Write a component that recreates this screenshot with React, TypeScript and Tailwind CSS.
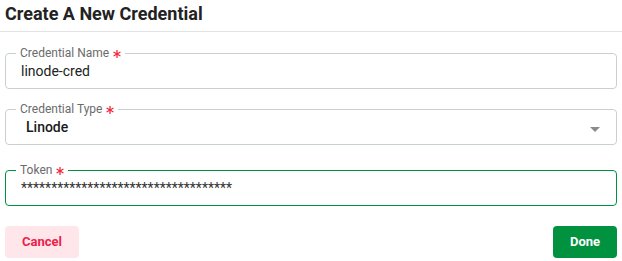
import React from 'react';

const Asterisk = () => (
  <svg width="8" height="8" viewBox="0 0 8 8" className="inline-block ml-[4px] mb-[-1px]">
    <g stroke="#f0283c" strokeWidth="1.3" strokeLinecap="round">
      <path d="M4 0.6v6.8" />
      <path d="M1 2.3l6 3.4" />
      <path d="M1 5.7l6-3.4" />
    </g>
  </svg>
);

const Label = ({ text }: { text: string }) => (
  <legend className="ml-[-5px] px-[4px] text-[12px] leading-[14px] text-[#6b6b6b]">
    {text}
    <Asterisk />
  </legend>
);

export default function App() {
  return (
    <div className="w-[622px] h-[261px] bg-white font-['Roboto',sans-serif] text-[#222]">
      <h1 className="h-[32px] px-[5px] pt-[3px] text-[18px] leading-[22px] font-bold text-[#222] border-b border-[#e3e3e3]">
        Create A New Credential
      </h1>

      <div className="px-[5px] pt-[14px] flex flex-col">
        <fieldset className="h-[43px] rounded-[4px] border border-[#c9d1d0] px-[15px]">
          <Label text="Credential Name" />
          <div className="text-[14px] leading-[20px] pt-[1px]">linode-cred</div>
        </fieldset>

        <fieldset className="mt-[13px] h-[43px] rounded-[4px] border border-[#c9d1d0] pl-[15px] pr-[16px]">
          <Label text="Credential Type" />
          <div className="flex items-center justify-between pt-[1px] pl-[5px]">
            <span className="text-[14px] leading-[20px] font-medium text-[#1a1a1a]">Linode</span>
            <svg width="10" height="5" viewBox="0 0 10 5" className="mt-[4px]">
              <path d="M0 0h10L5 5z" fill="#8a8a8a" />
            </svg>
          </div>
        </fieldset>

        <fieldset className="mt-[18px] h-[43px] rounded-[4px] border border-[#00913f] px-[15px]">
          <Label text="Token" />
          <div className="text-[14px] leading-[20px] pt-[1px] text-[#333]">
            ***********************************
          </div>
        </fieldset>

        <div className="mt-[20px] flex justify-between">
          <button className="h-[32px] w-[74px] rounded-[4px] bg-[#ffe6ea] text-[13px] font-bold text-[#ef1d4b]">
            Cancel
          </button>
          <button className="h-[32px] w-[64px] rounded-[4px] bg-[#00923f] text-[13px] font-bold text-white">
            Done
          </button>
        </div>
      </div>
    </div>
  );
}
